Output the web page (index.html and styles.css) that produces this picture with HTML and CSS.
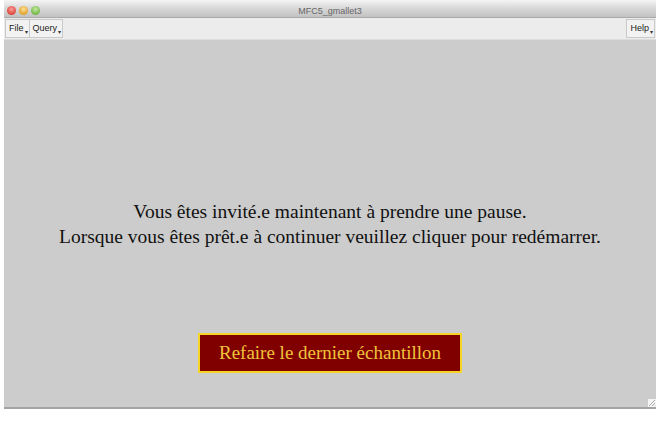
FILE: index.html
```html
<!DOCTYPE html>
<html lang="fr">
<head>
    <meta charset="UTF-8">
    <title>MFC5_gmallet3</title>
    <link rel="stylesheet" href="styles.css">
</head>
<body>
    <div class="window">
        <!-- barre de titre -->
        <div class="titlebar">
            <div class="lights">
                <span class="light red"></span>
                <span class="light yellow"></span>
                <span class="light green"></span>
            </div>
            <div class="title">MFC5_gmallet3</div>
        </div>

        <!-- menus -->
        <div class="menubar">
            <div class="menu">File<span class="arrow">&#9662;</span></div>
            <div class="menu">Query<span class="arrow">&#9662;</span></div>
            <div class="spacer"></div>
            <div class="menu">Help<span class="arrow">&#9662;</span></div>
        </div>

        <!-- écran de pause -->
        <div class="content">
            <div class="message">
                <p>Vous êtes invité.e maintenant à prendre une pause.</p>
                <p>Lorsque vous êtes prêt.e à continuer veuillez cliquer pour redémarrer.</p>
            </div>
            <button class="redo-button">Refaire le dernier échantillon</button>
            <div class="grip">
                <svg width="8" height="8" viewBox="0 0 8 8">
                    <path d="M7 1 L1 7 M7 4 L4 7 M7 6.5 L6.5 7" stroke="#999" stroke-width="0.8" fill="none"/>
                </svg>
            </div>
        </div>
    </div>
</body>
</html>
```

FILE: styles.css
```css
body {
    margin: 0;
    background: #fff;
    font-family: "Liberation Sans", Arial, sans-serif;
}

.window {
    width: 652px;
    margin-left: 4px;
    display: flex;
    flex-direction: column;
}

.titlebar {
    height: 17px;
    position: relative;
    background: linear-gradient(#f4f4f4, #dadada 45%, #c2c2c2);
    border-bottom: 1px solid #a9a9a9;
    display: flex;
    align-items: center;
    justify-content: center;
}

.lights {
    position: absolute;
    left: 3px;
    top: 6px;
    display: flex;
    gap: 3px;
}

.light {
    width: 9px;
    height: 9px;
    border-radius: 50%;
}

.red { background: radial-gradient(circle at 50% 35%, #f7a09a, #e0443a 70%); }
.yellow { background: radial-gradient(circle at 50% 35%, #fbe19a, #e2a32a 70%); }
.green { background: radial-gradient(circle at 50% 35%, #c4eaa0, #72b84a 70%); }

.title {
    font-size: 9px;
    color: #666;
    margin-top: 5px;
}

.menubar {
    height: 21px;
    background: #ececec;
    border-bottom: 1px solid #dcdcdc;
    display: flex;
    align-items: center;
    padding: 0 1px;
}

.menu {
    position: relative;
    height: 17px;
    padding: 0 5px 0 3px;
    border: 1px solid #c9c9c9;
    background: #f2f2f2;
    font-size: 9px;
    color: #222;
    line-height: 17px;
}

.menu + .menu {
    border-left: none;
}

.spacer {
    flex: 1;
}

.spacer + .menu {
    border-left: 1px solid #c9c9c9;
}

.arrow {
    position: absolute;
    right: 1px;
    bottom: -4px;
    font-size: 6px;
    color: #333;
}

.content {
    position: relative;
    height: 369px;
    background: #cccccc;
    border-bottom: 2px solid #a4a4a4;
    display: flex;
    flex-direction: column;
    align-items: center;
    padding-top: 159px;
    box-sizing: border-box;
}

.message {
    text-align: center;
    font-family: "Liberation Serif", "Times New Roman", serif;
    font-size: 19.5px;
    line-height: 25px;
    color: #111;
}

.message p {
    margin: 0;
}

.redo-button {
    margin-top: 84px;
    width: 264px;
    height: 40px;
    background: #800000;
    border: 2px solid #f5d327;
    color: #f0c43c;
    font-family: "Liberation Serif", "Times New Roman", serif;
    font-size: 19px;
    padding: 0;
}

.grip {
    position: absolute;
    right: 0;
    bottom: 0;
    width: 8px;
    height: 8px;
    background: #f4f4f4;
    display: flex;
}
```
